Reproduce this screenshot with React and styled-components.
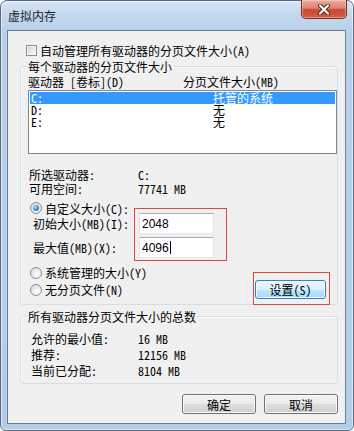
import React from 'react';
import styled, {createGlobalStyle, css} from 'styled-components';

const GlobalStyle = createGlobalStyle`
    html, body {
        margin: 0;
        padding: 0;
        background: #ffffff;
    }
    body {
        font-family: "Noto Sans Mono CJK SC", "Noto Sans CJK SC", sans-serif;
        font-size: 12px;
        color: #000;
    }
`;

const Window = styled.div`
    width: 354px;
    height: 431px;
    box-sizing: border-box;
    display: flex;
    flex-direction: column;
    border: 1px solid #5a6b80;
    border-radius: 7px 7px 6px 6px;
    padding: 0 7px 6px 6px;
    background: linear-gradient(180deg, #d7e6f5 0px, #c2d8ee 14px, #b8d0ea 30px, #b4cde8 100%);
    box-shadow: inset 0 0 0 1px rgba(255, 255, 255, 0.55);
`;

const TitleBar = styled.div`
    height: 29px;
    flex-shrink: 0;
    display: flex;
    justify-content: space-between;
    align-items: flex-start;
`;

const Title = styled.div`
    padding: 8px 0 0 1px;
    line-height: 13px;
    color: #1e1e1e;
`;

const CloseButton = styled.div`
    width: 46px;
    height: 19px;
    margin: -1px -1px 0 0;
    box-sizing: border-box;
    display: flex;
    align-items: center;
    justify-content: center;
    border: 1px solid #7d2a1d;
    border-top: none;
    border-radius: 0 0 5px 5px;
    background: linear-gradient(180deg, #eab0a2 0%, #dc8370 45%, #c84630 55%, #d4603f 100%);
    box-shadow: inset 0 0 0 1px rgba(255, 220, 210, 0.45);
`;

const Client = styled.div`
    flex: 1;
    display: flex;
    flex-direction: column;
    border: 1px solid #6b7d90;
    background: #f0f0f0;
    padding: 13px 7px 9px 12px;
`;

const CheckRow = styled.div`
    display: flex;
    align-items: center;
    gap: 3px;
    margin-left: 6px;
    height: 13px;
    line-height: 13px;
`;

const CheckBox = styled.span`
    width: 11px;
    height: 11px;
    box-sizing: border-box;
    border: 1px solid #8e8f8f;
    background: linear-gradient(135deg, #c9ced4 0%, #eceef0 60%, #fafafa 100%);
    box-shadow: inset 0 0 0 1px #f4f4f4;
`;

const Group = styled.fieldset`
    margin: ${p => p.$top}px 0 0 0;
    padding: 0;
    min-width: 0;
    width: 318px;
    box-sizing: border-box;
    border: 1px solid #d5dfe5;
    border-radius: 3px;
    box-shadow: inset 1px 1px 0 #fbfbfb;
`;

const Legend = styled.legend`
    margin-left: 6px;
    padding: 0 1px;
    line-height: 13px;
`;

const GroupBody = styled.div`
    padding: ${p => p.$pad};
`;

const ListHeader = styled.div`
    display: grid;
    grid-template-columns: 155px 1fr;
    line-height: 13px;
`;

const DriveList = styled.div`
    margin-top: 2px;
    height: 64px;
    box-sizing: border-box;
    border: 1px solid #828790;
    background: #fff;
    padding: 1px;
`;

const DriveRow = styled.div`
    display: grid;
    grid-template-columns: 182px 1fr;
    height: 12px;
    line-height: 12px;
    padding-left: 1px;
    ${p => p.$selected && css`
        background: #3399ff;
        color: #fff;
    `}
`;

const InfoGrid = styled.div`
    display: grid;
    grid-template-columns: ${p => p.$label}px 1fr;
    grid-auto-rows: ${p => p.$row}px;
    align-items: center;
    margin-top: ${p => p.$top || 0}px;
    padding-left: ${p => p.$left || 0}px;
`;

const RadioRow = styled.div`
    display: flex;
    align-items: center;
    gap: 3px;
    margin: ${p => p.$top || 0}px 0 0 2px;
    height: ${p => p.$h || 13}px;
    line-height: 13px;
`;

const Radio = styled.span`
    position: relative;
    width: 12px;
    height: 12px;
    box-sizing: border-box;
    border-radius: 50%;
    border: 1px solid #8d8e8e;
    background: radial-gradient(circle at 60% 65%, #fdfdfd 0%, #e6e7e8 55%, #c9ccd0 100%);
    ${p => p.$checked && css`
        &::after {
            content: '';
            position: absolute;
            left: 2px;
            top: 2px;
            width: 6px;
            height: 6px;
            border-radius: 50%;
            background: radial-gradient(circle at 35% 35%, #b6e0fb 0%, #3f8ad4 55%, #1a4f8e 100%);
        }
    `}
`;

const SizeBlock = styled.div`
    display: flex;
    margin-top: -1px;
    padding-left: 5px;
`;

const Stack = styled.div`
    display: flex;
    flex-direction: column;
    gap: 3px;
    width: ${p => p.$w}px;
`;

const FieldLabel = styled.div`
    height: 21px;
    line-height: 21px;
`;

const Marked = styled.div`
    position: relative;
    &::after {
        content: '';
        position: absolute;
        inset: ${p => p.$inset};
        border: 1px solid #dc4a3e;
        pointer-events: none;
    }
`;

const TextBox = styled.div`
    width: 75px;
    height: 21px;
    box-sizing: border-box;
    display: flex;
    align-items: center;
    padding-left: 2px;
    background: #fff;
    border: 1px solid #e2e3ea;
    border-top-color: #abadb3;
    border-bottom-color: #e3e9ef;
    font-family: "Liberation Sans", sans-serif;
    font-size: 12px;
`;

const Caret = styled.span`
    width: 1px;
    height: 13px;
    margin-left: 1px;
    background: #000;
`;

const LastRow = styled.div`
    display: flex;
    align-items: center;
    justify-content: space-between;
    margin-top: 1px;
    padding-right: 11px;
`;

const PushButton = styled.div`
    width: ${p => p.$w}px;
    height: ${p => p.$h}px;
    box-sizing: border-box;
    display: flex;
    align-items: center;
    justify-content: center;
    border: 1px solid #707070;
    border-radius: 3px;
    background: linear-gradient(180deg, #f2f2f2 0%, #ebebeb 50%, #dddddd 51%, #cfcfcf 100%);
    box-shadow: inset 0 0 0 1px #fbfbfb;
    line-height: 13px;
    ${p => p.$hot && css`
        border-color: #3c7fb1;
        background: linear-gradient(180deg, #eaf6fd 0%, #d9f0fc 50%, #bee6fd 51%, #a7d9f5 100%);
        box-shadow: inset 0 0 0 1px #f2fafe;
    `}
`;

const ButtonRow = styled.div`
    margin-top: auto;
    display: flex;
    justify-content: flex-end;
    gap: 8px;
`;

const drives = [
    {name: 'C:', size: '托管的系统', selected: true},
    {name: 'D:', size: '无'},
    {name: 'E:', size: '无'},
];

const totals = [
    ['允许的最小值:', '16 MB'],
    ['推荐:', '12156 MB'],
    ['当前已分配:', '8104 MB'],
];

function CloseGlyph() {
    return (
        <svg width="14" height="11" viewBox="0 0 14 11">
            <path d="M3 1.5 L11 9.5 M11 1.5 L3 9.5" stroke="#5a1c12" strokeWidth="4" strokeLinecap="round" fill="none"/>
            <path d="M3 1.5 L11 9.5 M11 1.5 L3 9.5" stroke="#ffffff" strokeWidth="2.2" strokeLinecap="round" fill="none"/>
        </svg>
    );
}

export default function App() {
    return (
        <>
            <GlobalStyle/>
            <Window>
                <TitleBar>
                    <Title>虚拟内存</Title>
                    <CloseButton><CloseGlyph/></CloseButton>
                </TitleBar>

                <Client>
                    <CheckRow>
                        <CheckBox/>
                        <span>自动管理所有驱动器的分页文件大小(A)</span>
                    </CheckRow>

                    <Group $top={3}>
                        <Legend>每个驱动器的分页文件大小</Legend>
                        <GroupBody $pad="2px 0 5px 7px">
                            <ListHeader>
                                <span>驱动器 [卷标](D)</span>
                                <span>分页文件大小(MB)</span>
                            </ListHeader>
                            <DriveList>
                                {drives.map(d => (
                                    <DriveRow key={d.name} $selected={d.selected}>
                                        <span>{d.name}</span>
                                        <span>{d.size}</span>
                                    </DriveRow>
                                ))}
                            </DriveList>

                            <InfoGrid $label={109} $row={14} $top={13} $left={1}>
                                <span>所选驱动器:</span>
                                <span>C:</span>
                                <span>可用空间:</span>
                                <span>77741 MB</span>
                            </InfoGrid>

                            <RadioRow $top={7} $h={12}>
                                <Radio $checked/>
                                <span>自定义大小(C):</span>
                            </RadioRow>

                            <SizeBlock>
                                <Stack $w={106}>
                                    <FieldLabel>初始大小(MB)(I):</FieldLabel>
                                    <FieldLabel>最大值(MB)(X):</FieldLabel>
                                </Stack>
                                <Marked $inset="-5px -13px -3px -5px">
                                    <Stack $w={75}>
                                        <TextBox>2048</TextBox>
                                        <TextBox>4096<Caret/></TextBox>
                                    </Stack>
                                </Marked>
                            </SizeBlock>

                            <RadioRow $top={8}>
                                <Radio/>
                                <span>系统管理的大小(Y)</span>
                            </RadioRow>

                            <LastRow>
                                <RadioRow>
                                    <Radio/>
                                    <span>无分页文件(N)</span>
                                </RadioRow>
                                <Marked $inset="-8px -4px -6px -2px">
                                    <PushButton $w={71} $h={19} $hot>设置(S)</PushButton>
                                </Marked>
                            </LastRow>
                        </GroupBody>
                    </Group>

                    <Group $top={5}>
                        <Legend>所有驱动器分页文件大小的总数</Legend>
                        <GroupBody $pad="7px 0 5px 10px">
                            <InfoGrid $label={107} $row={16}>
                                {totals.map(([label, value]) => (
                                    <React.Fragment key={label}>
                                        <span>{label}</span>
                                        <span>{value}</span>
                                    </React.Fragment>
                                ))}
                            </InfoGrid>
                        </GroupBody>
                    </Group>

                    <ButtonRow>
                        <PushButton $w={74} $h={20}>确定</PushButton>
                        <PushButton $w={74} $h={20}>取消</PushButton>
                    </ButtonRow>
                </Client>
            </Window>
        </>
    );
}
